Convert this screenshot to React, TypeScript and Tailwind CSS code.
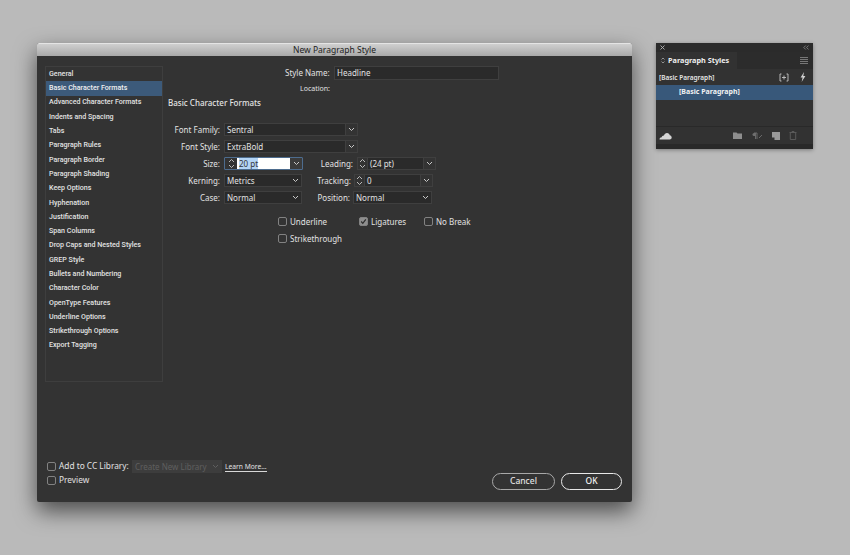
const SECTIONS = [
  "General",
  "Basic Character Formats",
  "Advanced Character Formats",
  "Indents and Spacing",
  "Tabs",
  "Paragraph Rules",
  "Paragraph Border",
  "Paragraph Shading",
  "Keep Options",
  "Hyphenation",
  "Justification",
  "Span Columns",
  "Drop Caps and Nested Styles",
  "GREP Style",
  "Bullets and Numbering",
  "Character Color",
  "OpenType Features",
  "Underline Options",
  "Strikethrough Options",
  "Export Tagging",
];

function Chevron({ color = "#c8c8c8" }: { color?: string }) {
  return (
    <svg width="7" height="5" viewBox="0 0 7 5" fill="none">
      <path d="M1 1l2.5 2.5L6 1" stroke={color} strokeWidth="1" />
    </svg>
  );
}

function Stepper({ width = "w-[12px]" }: { width?: string }) {
  return (
    <div className={`flex h-full shrink-0 items-center justify-center ${width}`}>
      <svg width="7" height="11" viewBox="0 0 7 11" fill="none">
        <path d="M1 4l2.5-2.5L6 4M1 7l2.5 2.5L6 7" stroke="#c8c8c8" strokeWidth="0.9" />
      </svg>
    </div>
  );
}

function Select({ value, width }: { value: string; width: string }) {
  return (
    <div className={`flex h-[13px] items-center justify-between border border-[#3f3f3f] bg-[#2a2a2a] pl-[2px] pr-[2px] ${width}`}>
      <span>{value}</span>
      <Chevron />
    </div>
  );
}

function Combo({ value, width }: { value: string; width: string }) {
  return (
    <div className={`flex h-[13px] border border-[#3f3f3f] bg-[#2a2a2a] ${width}`}>
      <span className="flex-1 pl-[2px] leading-[11px]">{value}</span>
      <span className="flex w-[12px] items-center justify-center border-l border-[#3f3f3f] bg-[#333333]">
        <Chevron />
      </span>
    </div>
  );
}

function SpinCombo({ value, width }: { value: string; width: string }) {
  return (
    <div className={`flex h-[13px] border border-[#3f3f3f] ${width}`}>
      <Stepper width="w-[9px]" />
      <span className="flex-1 border-l border-[#3f3f3f] bg-[#2a2a2a] pl-[2px] leading-[11px]">{value}</span>
      <span className="flex w-[12px] items-center justify-center border-l border-[#3f3f3f]">
        <Chevron />
      </span>
    </div>
  );
}

function Check({ label, checked, className }: { label: string; checked?: boolean; className?: string }) {
  return (
    <div className={`flex items-center gap-[3px] ${className ?? ""}`}>
      <span className={`flex size-[9px] shrink-0 items-center justify-center rounded-[2px] border border-[#828282] ${checked ? "bg-[#8e8e8e]" : ""}`}>
        {checked && (
          <svg width="7" height="7" viewBox="0 0 7 7" fill="none">
            <path d="M1.2 3.5l1.6 1.8L5.8 1.3" stroke="#2c2c2c" strokeWidth="1.2" />
          </svg>
        )}
      </span>
      <span className="whitespace-nowrap">{label}</span>
    </div>
  );
}

function Label({ text, width }: { text: string; width: string }) {
  return <span className={`shrink-0 text-right whitespace-nowrap ${width}`}>{text}</span>;
}

function ParagraphStylesPanel() {
  return (
    <div className="flex h-[106px] w-[157px] shrink-0 flex-col bg-[#323232] text-[6.5px] font-semibold text-[#e4e4e4] shadow-[0_1px_4px_rgba(0,0,0,0.35)]">
      <div className="flex h-[9px] items-center justify-between bg-[#2b2b2b] px-[4px] text-[#a8a8a8]">
        <svg width="5" height="5" viewBox="0 0 5 5" fill="none">
          <path d="M0.5 0.5l4 4M4.5 0.5l-4 4" stroke="#b4b4b4" strokeWidth="0.9" />
        </svg>
        <svg width="6" height="5" viewBox="0 0 6 5" fill="none">
          <path d="M2.8 0.5L0.8 2.5l2 2M5.6 0.5l-2 2 2 2" stroke="#8c8c8c" strokeWidth="0.8" />
        </svg>
      </div>
      <div className="flex h-[17px] items-center bg-[#2c2c2c]">
        <div className="flex h-full w-[81px] items-center gap-[3px] bg-[#323232] pl-[5px] text-[7.3px] font-bold text-[#eeeeee]">
          <svg width="4" height="7" viewBox="0 0 4 7" fill="none">
            <path d="M0.5 2.5L2 1l1.5 1.5M0.5 4.5L2 6l1.5-1.5" stroke="#bcbcbc" strokeWidth="0.7" />
          </svg>
          Paragraph Styles
        </div>
        <div className="ml-auto mr-[5px] flex w-[8px] flex-col gap-[1px]">
          <span className="h-[1px] bg-[#777777]" />
          <span className="h-[1px] bg-[#777777]" />
          <span className="h-[1px] bg-[#777777]" />
          <span className="h-[1px] bg-[#777777]" />
        </div>
      </div>
      <div className="flex h-[16px] items-center justify-between pl-[3px] pr-[7px]">
        <span className="pt-[1px]">[Basic Paragraph]</span>
        <div className="flex items-center gap-[11px]">
          <svg width="10" height="9" viewBox="0 0 10 9" fill="none">
            <path d="M2.5 1H1v7h1.5M7.5 1H9v7H7.5M5 2.5v4M3 4.5h4" stroke="#c4c4c4" strokeWidth="0.9" />
          </svg>
          <svg width="6" height="10" viewBox="0 0 6 10" fill="#d0d0d0">
            <path d="M4 0L0.6 5.4h2L1.6 10l3.8-6H3.3z" />
          </svg>
        </div>
      </div>
      <div className="flex h-[15px] items-center bg-[#38587a] pl-[23px] text-[7px] font-bold text-[#f2f2f2]">[Basic Paragraph]</div>
      <div className="flex-1 border-b border-[#292929]" />
      <div className="flex h-[17px] items-center pl-[3px] pr-[16px]">
        <svg width="13" height="9" viewBox="0 0 13 9" fill="#d4d4d4">
          <path d="M0.5 8.5c0-1.3 1-2.2 2.2-2.2.2-1.3 1.2-2 2.2-1.9C5.5 3 6.5 2 8 2s2.6 1 2.8 2.3c1 .1 1.9 1.1 1.9 2.2 0 1.2-.9 2-2 2z" />
        </svg>
        <div className="ml-auto flex items-center gap-[9px]">
          <svg width="9" height="7" viewBox="0 0 9 7" fill="#8e8e8e">
            <path d="M0 0.5h3.5l1 1H9V7H0z" />
          </svg>
          <svg width="12" height="8" viewBox="0 0 12 8" fill="none">
            <path d="M3 1h3v6M4.5 1v6" stroke="#6f6f6f" strokeWidth="0.9" />
            <path d="M3 1a1.5 1.5 0 000 3h1.5V1z" fill="#6f6f6f" />
            <path d="M8 6l3-3" stroke="#6f6f6f" strokeWidth="0.9" />
          </svg>
          <svg width="8" height="8" viewBox="0 0 8 8" fill="#9a9a9a">
            <path d="M0 0h8v8H2.5V5.5H0z" />
          </svg>
          <svg width="8" height="9" viewBox="0 0 8 9" fill="none">
            <path d="M0.5 1.5h7M3 1.5V.5h2v1M1.3 2v6.5h5.4V2" stroke="#5e5e5e" strokeWidth="0.9" />
          </svg>
        </div>
      </div>
      <div className="h-[5px] bg-[#292929]" />
    </div>
  );
}

export default function App() {
  return (
    <div className="flex h-[555px] w-[850px] items-start gap-[24px] overflow-hidden bg-[#bababa] pl-[37px] pt-[43px] font-['Noto_Sans',sans-serif]">
      <div className="flex h-[459px] w-[595px] shrink-0 flex-col rounded-[2px] bg-[#333333] text-[7.5px] text-[#e2e2e2] shadow-[0_9px_22px_rgba(0,0,0,0.6)]">
        <div className="flex h-[13px] items-center justify-center rounded-t-[2px] border-t border-[#e4e4e4] bg-gradient-to-b from-[#cfcfcf] to-[#a9a9a9] text-[8.5px] text-[#222222]">
          New Paragraph Style
        </div>

        <div className="flex flex-1 flex-col justify-between pb-[12px] pl-[8px] pr-[10px] pt-[10px]">
          <div className="flex gap-[5px]">
            <div className="flex h-[316px] w-[118px] shrink-0 flex-col border border-[#3e3e3e] font-['Roboto',sans-serif] text-[7.1px]">
              {SECTIONS.map((s) => (
                <div
                  key={s}
                  className={`flex h-[14.3px] items-center whitespace-nowrap pl-[3px] font-medium ${s === "Basic Character Formats" ? "bg-[#3c5a7a] text-[#f0f0f0]" : ""}`}
                >
                  {s}
                </div>
              ))}
            </div>

            <div className="flex flex-1 flex-col">
              <div className="flex h-[14px] items-center pl-[117px] text-[8px]">
                <Label text="Style Name:" width="w-[44px]" />
                <div className="ml-[5px] h-[14px] w-[165px] border border-[#3f3f3f] bg-[#2a2a2a] pl-[2px] leading-[12px]">Headline</div>
              </div>
              <div className="mt-[3px] flex h-[12px] items-center pl-[117px] text-[7px]">
                <Label text="Location:" width="w-[45px]" />
              </div>
              <div className="mt-[1px] h-[14px] text-[8px] font-medium leading-[14px]">Basic Character Formats</div>

              <div className="mt-[13px] flex flex-col gap-[4px] text-[8px]">
                <div className="flex h-[13px] items-center gap-[4px]">
                  <Label text="Font Family:" width="w-[52px]" />
                  <Combo value="Sentral" width="w-[134px]" />
                </div>
                <div className="flex h-[13px] items-center gap-[4px]">
                  <Label text="Font Style:" width="w-[52px]" />
                  <Combo value="ExtraBold" width="w-[134px]" />
                </div>
                <div className="flex h-[13px] items-center gap-[4px]">
                  <Label text="Size:" width="w-[52px]" />
                  <div className="flex h-[13px] w-[79px] rounded-[1px] border border-[#4d6c8e]">
                    <Stepper />
                    <span className="flex-1 bg-white pl-[2px] leading-[11px] text-[#333333]">
                      <span className="bg-[#b3d4f5]">20 pt</span>
                    </span>
                    <span className="flex w-[12px] items-center justify-center bg-[#3b3b3b]">
                      <Chevron />
                    </span>
                  </div>
                  <Label text="Leading:" width="w-[46px]" />
                  <SpinCombo value="(24 pt)" width="w-[79px]" />
                </div>
                <div className="flex h-[13px] items-center gap-[4px]">
                  <Label text="Kerning:" width="w-[52px]" />
                  <Select value="Metrics" width="w-[78px]" />
                  <Label text="Tracking:" width="w-[45px]" />
                  <SpinCombo value="0" width="-ml-[1px] w-[79px]" />
                </div>
                <div className="flex h-[13px] items-center gap-[4px]">
                  <Label text="Case:" width="w-[52px]" />
                  <Select value="Normal" width="w-[78px]" />
                  <Label text="Position:" width="w-[44px]" />
                  <Select value="Normal" width="-ml-[1px] w-[79px]" />
                </div>
              </div>

              <div className="mt-[13px] flex flex-col gap-[8px] pl-[110px] text-[8px]">
                <div className="flex h-[9px] items-center">
                  <Check label="Underline" className="w-[81px]" />
                  <Check label="Ligatures" checked className="w-[65px]" />
                  <Check label="No Break" />
                </div>
                <Check label="Strikethrough" className="h-[9px]" />
              </div>
            </div>
          </div>

          <div className="flex items-end justify-between">
            <div className="mb-[5px] flex flex-col gap-[3px] pl-[2px] text-[8.3px]">
              <div className="flex h-[13px] items-center">
                <Check label="Add to CC Library:" className="w-[81px]" />
                <div className="ml-[4px] flex h-[13px] w-[90px] items-center justify-between bg-[#3d3d3d] px-[3px] text-[8px] text-[#5f5f5f]">
                  <span>Create New Library</span>
                  <Chevron color="#5f5f5f" />
                </div>
                <span className="ml-[3px] border-b border-[#d8d8d8] text-[6.7px] leading-[9px]">Learn More...</span>
              </div>
              <Check label="Preview" className="h-[9px]" />
            </div>
            <div className="flex gap-[6px] text-[8.5px] font-medium">
              <div className="flex h-[17px] w-[63px] items-center justify-center rounded-full border border-[#a8a8a8]">Cancel</div>
              <div className="flex h-[17px] w-[61px] items-center justify-center rounded-full border border-[#e8e8e8] text-[#f2f2f2]">OK</div>
            </div>
          </div>
        </div>
      </div>

      <ParagraphStylesPanel />
    </div>
  );
}
